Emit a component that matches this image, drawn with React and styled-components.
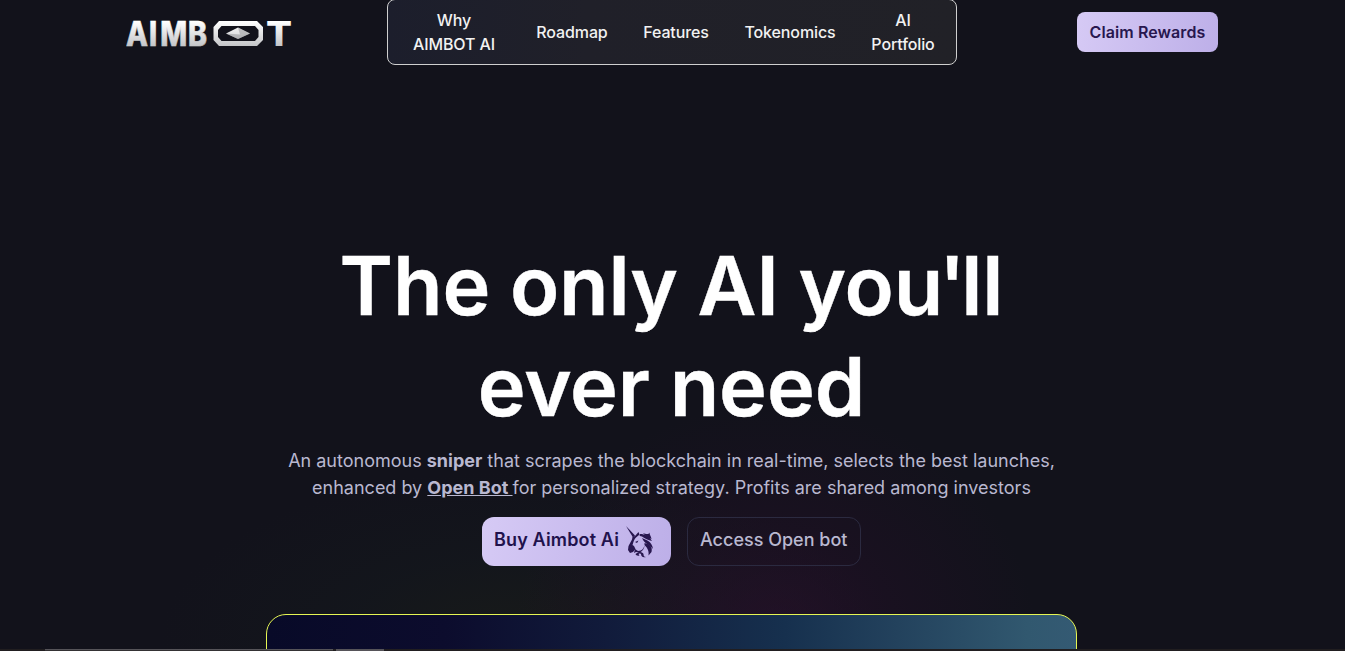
import React from "react";
import styled, { createGlobalStyle } from "styled-components";

const Global = createGlobalStyle`
  * { box-sizing: border-box; }
  body { margin: 0; background: #12121b; font-family: Inter, "Liberation Sans", sans-serif; overflow: hidden; }
`;
const Page = styled.div`
  position: relative;
  width: 1345px;
  height: 651px;
  overflow: hidden;
  display: flex;
  flex-direction: column;
  background:
    radial-gradient(ellipse 260px 230px at 775px 635px, rgba(50, 14, 50, 0.5), rgba(42, 14, 44, 0.3) 45%, transparent),
    radial-gradient(ellipse 360px 170px at 520px 640px, rgba(28, 32, 24, 0.6), rgba(22, 30, 30, 0.3) 50%, transparent),
    #12121b;
`;
const Header = styled.header`
  display: grid;
  grid-template-columns: 387px 570px 1fr;
  height: 64px;
  align-items: center;
`;
const LogoLink = styled.div`
  padding-left: 126px;
  svg { display: block; }
`;
const Nav = styled.nav`
  height: 66px;
  margin: -1px 0;
  border: 1px solid #cfcfcf;
  border-radius: 8px;
  background: linear-gradient(90deg, #1c1e2c, #202029 35%, #212127);
  display: flex;
  align-items: center;
  padding-left: 18px;
`;
const NavItem = styled.a`
  width: ${(p) => p.$w}px;
  text-align: center;
  color: #f2f2f2;
  font-size: 16px;
  font-weight: 500;
  line-height: 24px;
  letter-spacing: -0.12px;
`;
const ClaimButton = styled.button`
  justify-self: start;
  margin-left: 120px;
  width: 141px;
  height: 40px;
  padding: 0;
  border: 0;
  border-radius: 8px;
  background: linear-gradient(100deg, #d6caf5, #bdafe8);
  color: #28174f;
  font: 600 16px Inter, sans-serif;
  letter-spacing: 0.1px;
`;
const Hero = styled.main`
  width: 1343px;
  display: flex;
  flex-direction: column;
  align-items: center;
  padding-top: 172px;
`;
const Title = styled.h1`
  margin: 0;
  color: #fff;
  font-size: 81px;
  font-weight: 600;
  line-height: 101px;
  letter-spacing: -0.1px;
  word-spacing: -0.6px;
  text-align: center;
  -webkit-text-stroke: 0.4px #fff;
`;
const Kern = styled.span`
  letter-spacing: ${(p) => p.$by}px;
`;
const Lead = styled.p`
  margin: 9px 0 0;
  color: #b9b8d0;
  font-size: 18px;
  line-height: 27px;
  text-align: center;
`;
const OpenBot = styled.a`
  font-weight: 700;
  text-decoration: underline;
  white-space: pre;
`;
const Actions = styled.div`
  display: flex;
  gap: 16px;
  margin-top: 16px;
`;
const ActionButton = styled.button`
  width: ${(p) => p.$w}px;
  height: 49px;
  display: flex;
  align-items: center;
  padding: 0 0 4px 12px;
  border-radius: 12px;
  border: ${(p) => (p.$primary ? "0" : "1px solid #2b2a40")};
  background: ${(p) => (p.$primary ? "linear-gradient(100deg, #d6caf5, #bdafe8)" : "transparent")};
  color: ${(p) => (p.$primary ? "#21124c" : "#b9b8d0")};
  font: ${(p) => (p.$primary ? 600 : 500)} 18px Inter, sans-serif;
  letter-spacing: ${(p) => (p.$primary ? 0.15 : 0)}px;
  white-space: nowrap;
  svg { margin: 5px 0 0 7px; flex: none; }
`;
const Preview = styled.section`
  width: 811px;
  height: 60px;
  margin-top: 48px;
  border: 1px solid #e6f653;
  border-radius: 20px;
  background: linear-gradient(90deg, #080a28, #0c0c2d 22%, #111b3b 42%, #16304e 64%, #23425d 78%, #31586f 94%, #345a73);
`;
const BottomEdge = styled.div`
  position: absolute;
  left: 0;
  bottom: 0;
  width: 100%;
  height: 2px;
  padding-left: 45px;
  display: flex;
  gap: 3px;
  background: #211e20;
`;
const EdgeTab = styled.span`
  width: ${(p) => p.$w}px;
  height: 2px;
  background: ${(p) => p.$bg};
  border-top: 1px solid #565459;
`;

function Logo() {
  return (
    <svg width="176" height="50" viewBox="0 -12.5 176 50">
      <defs>
        <linearGradient id="silver" gradientUnits="userSpaceOnUse" x1="0" y1="2" x2="0" y2="27">
          <stop offset="0" stopColor="#fff" />
          <stop offset="1" stopColor="#c3c4c7" />
        </linearGradient>
      </defs>
      <g fill="url(#silver)" fontFamily="Inter, sans-serif" fontWeight="800" fontSize="34">
        <text transform="scale(.84 1)" x="0 27.500 40.800 73.800" y="26.500" stroke="url(#silver)" strokeWidth=".6">AIMB</text>
        <text x="140" y="26.500" textLength="26" lengthAdjust="spacingAndGlyphs">T</text>
        <path fillRule="evenodd" d="M93 1.500H131L137 7.500V20.500L131 26.500H93L87.500 20.500V7.500ZM95.500 6.500L92 10.500V17.500L95.500 21.500H129L132.500 17.500V10.500L129 6.500Z" />
        <path d="M100 14L112 8L124 14L112 19.500Z" />
      </g>
      <path d="M100 14L114 15L124 14L112 19.500Z" fill="#77787c" opacity=".4" />
      <path d="M112 8L124 14L114 15Z" fill="#8f9094" opacity=".5" />
    </svg>
  );
}

function Unicorn() {
  return (
    <svg width="28" height="32" viewBox="0 0 28 32" fill="#28174f">
      <path d="M0 0L9 9.500L7 11.500Z" />
      <path d="M9 10L12.500 6L14 10L13 9L10 11.500C8 13 7.500 16 6.500 19L8 20L9.500 23L7 26L4 27L2 24L2.500 20L6 13.500L6.500 11Z" />
      <path d="M9 23L12 25C16 25 18 22 18.500 19C18.500 22 17 25 14 26.500L10 26L8 27Z" />
      <path d="M14 8C19 8 23 10 26 15C22 14 19 13 16 10.500L14 10Z" />
      <path d="M17 7C21 9 23 8 23.500 6.500C23.500 9 25 10 25.500 13C22 12 19 10 17 7Z" />
      <path d="M16 12C20 14 26 15 27 23C24 18 19 19 16 12Z" />
      <path d="M18.500 17C23 18 27 20 25.500 26L22.500 29.500C23 26 22.500 23 18.500 19Z" />
      <path d="M9.500 28C13 24.500 17 26 17.500 28C17.500 30 18 31 20 31C16.500 32 15 30 15 28C12.500 27 12 28 13.500 29.500C11.500 30 10 29.500 9.500 28Z" />
      <path d="M9 16L12.500 14.500L11 17Z" />
    </svg>
  );
}

export default function App() {
  return (
    <Page>
      <Global />
      <Header>
        <LogoLink><Logo /></LogoLink>
        <Nav>
          <NavItem $w={96}>Why<br />AIMBOT AI</NavItem>
          <NavItem $w={140}>Roadmap</NavItem>
          <NavItem $w={68}>Features</NavItem>
          <NavItem $w={160}>Tokenomics</NavItem>
          <NavItem $w={66}>AI<br />Portfolio</NavItem>
        </Nav>
        <ClaimButton>Claim Rewards</ClaimButton>
      </Header>
      <Hero>
        <Title>The only AI yo<Kern $by={-4.5}>u</Kern><Kern $by={-4}>'</Kern>ll<br />ever need</Title>
        <Lead>
          An autonomous <b>sniper</b> that scrapes the blockchain in real-time, selects the best launches,<br />
          enhanced by <OpenBot>Open Bot </OpenBot>for personalized strategy. Profits are shared among investors
        </Lead>
        <Actions>
          <ActionButton $primary $w={189}>Buy Aimbot Ai <Unicorn /></ActionButton>
          <ActionButton $w={174}>Access Open bot</ActionButton>
        </Actions>
        <Preview />
      </Hero>
      <BottomEdge>
        <EdgeTab $w={288} $bg="#343234" />
        <EdgeTab $w={48} $bg="#565459" />
      </BottomEdge>
    </Page>
  );
}
